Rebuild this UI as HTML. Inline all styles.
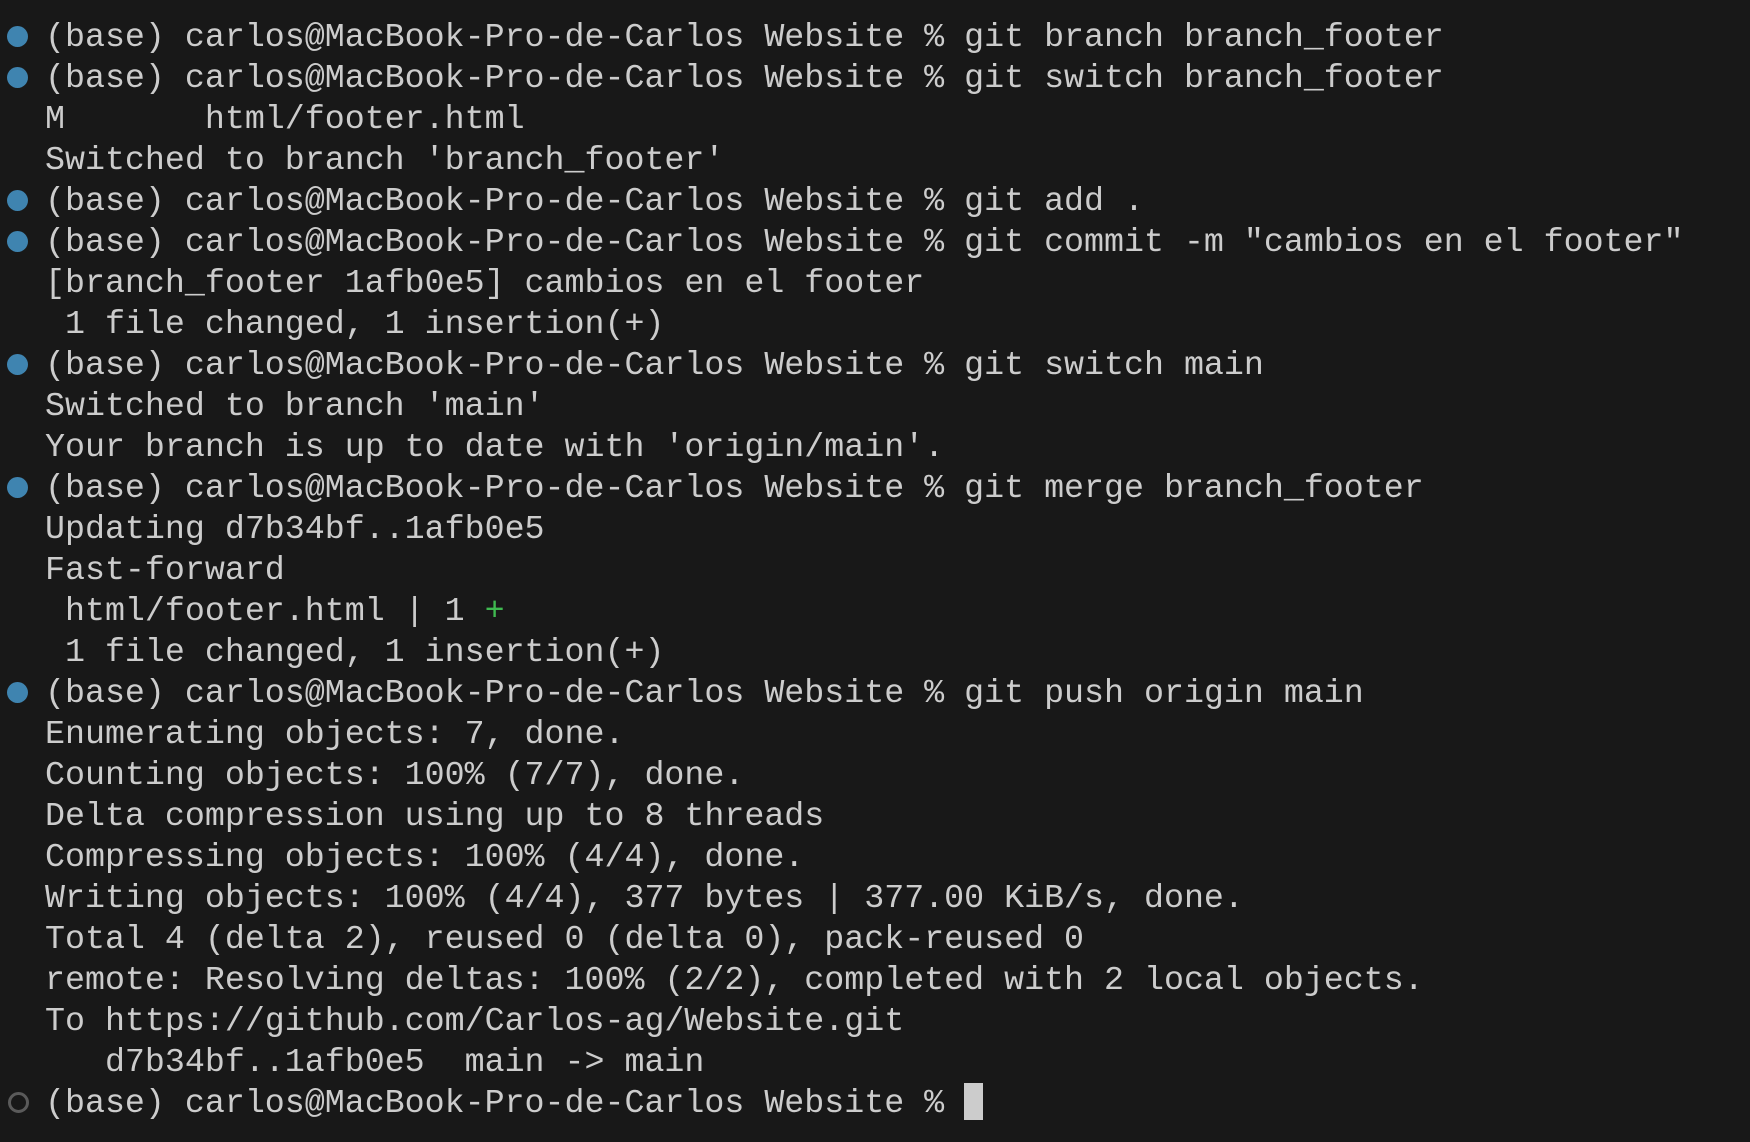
<!DOCTYPE html>
<html><head><meta charset="utf-8"><style>
html,body{margin:0;padding:0;background:#181818;width:1750px;height:1142px;overflow:hidden}
.t{position:absolute;left:45px;top:17px;font-family:"Liberation Mono",monospace;font-size:33.3px;line-height:41px;color:#cccccc;white-space:pre}
.d{position:absolute;left:7px;width:21px;height:21px;border-radius:50%;background:#3f84b0}
.o{position:absolute;left:8px;width:15px;height:15px;border-radius:50%;border:3px solid #5a5a5a}
.g{color:#3fb950}
.c{display:inline-block;width:19px;height:37px;background:#cccccc;vertical-align:-8px}
</style></head><body>
<div class="d" style="top:26px"></div>
<div class="d" style="top:67px"></div>
<div class="d" style="top:190px"></div>
<div class="d" style="top:231px"></div>
<div class="d" style="top:354px"></div>
<div class="d" style="top:477px"></div>
<div class="d" style="top:682px"></div>
<div class="o" style="top:1092px"></div>
<div class="t">(base) carlos@MacBook-Pro-de-Carlos Website % git branch branch_footer
(base) carlos@MacBook-Pro-de-Carlos Website % git switch branch_footer
M       html/footer.html
Switched to branch 'branch_footer'
(base) carlos@MacBook-Pro-de-Carlos Website % git add .
(base) carlos@MacBook-Pro-de-Carlos Website % git commit -m "cambios en el footer"
[branch_footer 1afb0e5] cambios en el footer
 1 file changed, 1 insertion(+)
(base) carlos@MacBook-Pro-de-Carlos Website % git switch main
Switched to branch 'main'
Your branch is up to date with 'origin/main'.
(base) carlos@MacBook-Pro-de-Carlos Website % git merge branch_footer
Updating d7b34bf..1afb0e5
Fast-forward
 html/footer.html | 1 <span class="g">+</span>
 1 file changed, 1 insertion(+)
(base) carlos@MacBook-Pro-de-Carlos Website % git push origin main
Enumerating objects: 7, done.
Counting objects: 100% (7/7), done.
Delta compression using up to 8 threads
Compressing objects: 100% (4/4), done.
Writing objects: 100% (4/4), 377 bytes | 377.00 KiB/s, done.
Total 4 (delta 2), reused 0 (delta 0), pack-reused 0
remote: Resolving deltas: 100% (2/2), completed with 2 local objects.
To https://github.com/Carlos-ag/Website.git
   d7b34bf..1afb0e5  main -> main
(base) carlos@MacBook-Pro-de-Carlos Website % <span class="c"></span></div>
</body></html>
